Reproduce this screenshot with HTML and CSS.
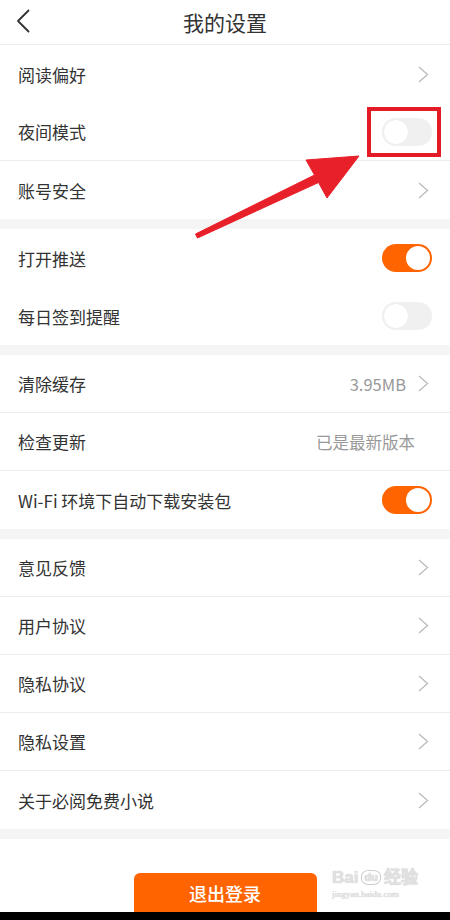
FILE: index.html
```
<!DOCTYPE html>
<html lang="zh-CN">
<head>
  <meta charset="UTF-8" />
  <meta name="viewport" content="width=device-width, initial-scale=1.0"/>
  <title>我的设置</title>
  <link rel="stylesheet" href="styles.css">
</head>
<body>
  <div class="page">
    <header class="topbar">
      <svg class="back" width="14" height="24" viewBox="0 0 14 24">
        <polyline points="12.5,1.5 2,12 12.5,22.5" fill="none" stroke="#333" stroke-width="1.8" stroke-linecap="round" stroke-linejoin="round"/>
      </svg>
      <h1>我的设置</h1>
    </header>

    <!-- 阅读 -->
    <section class="group">
      <div class="row"><span class="label">阅读偏好</span><svg class="arrow" viewBox="0 0 11 17"><polyline points="1,1 9.5,8.5 1,16"/></svg></div>
      <div class="row line"><span class="label">夜间模式</span><span class="switch"></span></div>
      <div class="row"><span class="label">账号安全</span><svg class="arrow" viewBox="0 0 11 17"><polyline points="1,1 9.5,8.5 1,16"/></svg></div>
    </section>

    <!-- 推送 -->
    <section class="group">
      <div class="row"><span class="label">打开推送</span><span class="switch on"></span></div>
      <div class="row"><span class="label">每日签到提醒</span><span class="switch"></span></div>
    </section>

    <!-- 缓存 / 更新 -->
    <section class="group">
      <div class="row line"><span class="label">清除缓存</span><span class="value">3.95MB</span><svg class="arrow" viewBox="0 0 11 17"><polyline points="1,1 9.5,8.5 1,16"/></svg></div>
      <div class="row line"><span class="label">检查更新</span><span class="value latest">已是最新版本</span></div>
      <div class="row"><span class="label">Wi-Fi 环境下自动下载安装包</span><span class="switch on"></span></div>
    </section>

    <!-- 关于 -->
    <section class="group">
      <div class="row line"><span class="label">意见反馈</span><svg class="arrow" viewBox="0 0 11 17"><polyline points="1,1 9.5,8.5 1,16"/></svg></div>
      <div class="row line"><span class="label">用户协议</span><svg class="arrow" viewBox="0 0 11 17"><polyline points="1,1 9.5,8.5 1,16"/></svg></div>
      <div class="row line"><span class="label">隐私协议</span><svg class="arrow" viewBox="0 0 11 17"><polyline points="1,1 9.5,8.5 1,16"/></svg></div>
      <div class="row line"><span class="label">隐私设置</span><svg class="arrow" viewBox="0 0 11 17"><polyline points="1,1 9.5,8.5 1,16"/></svg></div>
      <div class="row"><span class="label">关于必阅免费小说</span><svg class="arrow" viewBox="0 0 11 17"><polyline points="1,1 9.5,8.5 1,16"/></svg></div>
    </section>

    <div class="footer">
      <button class="logout">退出登录</button>
      <div class="watermark">
        <div class="brand"><span>Bai</span><span class="du">du</span><span>经验</span></div>
        <div class="site">jingyan.baidu.com</div>
      </div>
    </div>
    <div class="sysbar"></div>

    <!-- annotation -->
    <svg class="annotation" width="450" height="920" viewBox="0 0 450 920">
      <rect x="369" y="109" width="70" height="46" fill="none" stroke="#e31b25" stroke-width="4"/>
      <polygon points="195.5,234 314.5,175 306,160 359,156 327,198 318.5,182.5 197.5,238" fill="#e8202a" stroke="#e8202a" stroke-width="1" stroke-linejoin="round"/>
    </svg>
  </div>
</body>
</html>
```

FILE: styles.css
```
* {
  box-sizing: border-box;
}

body {
  margin: 0;
  padding: 0;
  background: #f5f5f5;
  font-family: "Noto Sans CJK SC", "Noto Sans", sans-serif;
  color: #333;
}

.page {
  position: relative;
  width: 450px;
  height: 920px;
  overflow: hidden;
}

.topbar {
  height: 45px;
  background: #fff;
  border-bottom: 1px solid #ececec;
  display: flex;
  align-items: center;
  justify-content: center;
  position: relative;
}

.topbar .back {
  position: absolute;
  left: 16px;
  top: 9px;
}

.topbar h1 {
  margin: 0;
  font-size: 21px;
  font-weight: normal;
  color: #333;
}

.group {
  background: #fff;
  margin-bottom: 10px;
}

.row {
  height: 58px;
  display: flex;
  align-items: center;
  padding: 0 18px;
}

.row.line {
  border-bottom: 1px solid #ececec;
}

.label {
  flex: 1;
  font-size: 17px;
  color: #333;
}

.value {
  font-size: 16.5px;
  color: #999;
  margin-right: 12px;
}

.value.latest {
  margin-right: 17px;
}

.arrow {
  width: 11px;
  height: 17px;
  margin-right: 3px;
  fill: none;
  stroke: #bbb;
  stroke-width: 1.3;
}

.switch {
  width: 50px;
  height: 28px;
  border-radius: 14px;
  background: #f0f0f0;
  position: relative;
}

.switch::after {
  content: "";
  position: absolute;
  top: 2px;
  left: 2px;
  width: 24px;
  height: 24px;
  border-radius: 50%;
  background: #fff;
  box-shadow: 0 0 1px #ddd;
}

.switch.on {
  background: #ff6400;
}

.switch.on::after {
  left: 24px;
  box-shadow: none;
}

.footer {
  height: 73px;
  background: #fff;
  position: relative;
  overflow: hidden;
  display: flex;
  justify-content: center;
}

.logout {
  margin-top: 34px;
  width: 183px;
  height: 46px;
  border: none;
  border-radius: 6px;
  background: #ff6400;
  color: #fff;
  font-family: inherit;
  font-size: 18px;
  font-weight: 500;
  padding: 0 0 6px;
}

.watermark {
  position: absolute;
  left: 332px;
  top: 30px;
  color: #e2e2e2;
  text-shadow: 0 0 1px #bbb;
  line-height: 1;
}

.watermark .brand {
  display: flex;
  align-items: center;
  gap: 1px;
  font-family: "Liberation Sans", sans-serif;
  font-size: 17px;
  font-weight: bold;
}

.watermark .du {
  font-size: 11px;
  border: 1px solid #ccc;
  border-radius: 40%;
  padding: 1px 2px;
  margin: 0 2px;
}

.watermark .site {
  font-family: "Liberation Serif", serif;
  font-size: 9px;
  margin-top: 4px;
}

.sysbar {
  height: 8px;
  background: #000;
}

.annotation {
  position: absolute;
  top: 0;
  left: 0;
  pointer-events: none;
}
```
